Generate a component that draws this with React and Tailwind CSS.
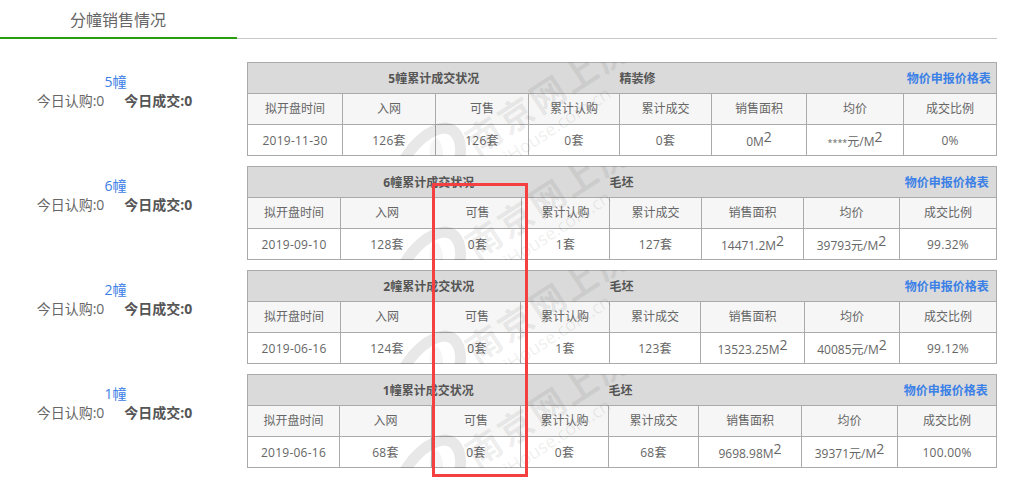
const font = { fontFamily: '"Open Sans", "Noto Sans CJK SC", sans-serif' };

const headers = ["拟开盘时间", "入网", "可售", "累计认购", "累计成交", "销售面积", "均价", "成交比例"];

const blocks = [
  {
    name: "5幢", title: "5幢累计成交状况", deco: "精装修",
    widths: [95, 93, 93, 91, 92, 95, 97, 93],
    cells: ["2019-11-30", "126套", "126套", "0套", "0套", ["0M"], ["元/M", "****"], "0%"],
  },
  {
    name: "6幢", title: "6幢累计成交状况", deco: "毛坯",
    widths: [93, 93, 88, 88, 92, 102, 96, 97],
    cells: ["2019-09-10", "128套", "0套", "1套", "127套", ["14471.2M"], ["39793元/M"], "99.32%"],
  },
  {
    name: "2幢", title: "2幢累计成交状况", deco: "毛坯",
    widths: [93, 93, 87, 89, 91, 104, 95, 97],
    cells: ["2019-06-16", "124套", "0套", "1套", "123套", ["13523.25M"], ["40085元/M"], "99.12%"],
  },
  {
    name: "1幢", title: "1幢累计成交状况", deco: "毛坯",
    widths: [92, 92, 89, 88, 90, 103, 96, 99],
    cells: ["2019-06-16", "68套", "0套", "0套", "68套", ["9698.98M"], ["39371元/M"], "100.00%"],
  },
];

function Watermark() {
  return (
    <div className="pointer-events-none absolute inset-0 overflow-hidden">
      <svg className="absolute left-0 top-0" width="750" height="94" viewBox="0 0 750 94" fill="none">
        <path d="M156 100 C166 82 182 67 198 66 C212 67 217 84 211 102" stroke="#000" strokeOpacity="0.09" strokeWidth="11" />
        <path d="M186 100 C180 90 182 80 190 76 C196 82 198 92 194 100 Z" fill="#000" fillOpacity="0.04" />
      </svg>
      <span className="absolute left-[302px] top-[32px] -translate-x-1/2 -translate-y-1/2 -rotate-[33deg] whitespace-nowrap text-[35px] font-bold tracking-[3px] text-black/[0.08]">
        南京网上房
      </span>
      <span className="absolute left-[310px] top-[63px] -translate-x-1/2 -translate-y-1/2 -rotate-[33deg] whitespace-nowrap text-[18px] text-black/[0.08]">
        iHouse.com.cn
      </span>
    </div>
  );
}

function Block({ b }) {
  return (
    <div className="flex">
      <div className="w-[229px] pt-[10px] text-center text-[14px] leading-[20px] text-[#666]">
        <div className="pl-[2px] text-[#3b80e6]">{b.name}</div>
        <div className="-mt-[1px]">
          <span>今日认购:0</span>
          <span className="ml-[20px] font-bold text-[#555]">今日成交:0</span>
        </div>
      </div>
      <div className="relative ml-[18px] h-[94px] w-[750px] overflow-hidden">
        <table className="w-[750px] table-fixed border-collapse text-center text-[12px] text-[#666]">
          <colgroup>
            {b.widths.map((w, i) => (
              <col key={i} style={{ width: w }} />
            ))}
          </colgroup>
          <tbody>
            <tr className="h-[31px] border border-[#aaa] bg-[#dadada] font-bold text-[#555]">
              <td colSpan={4} className="p-0 pt-[2px]">{b.title}</td>
              <td colSpan={3} className="p-0 pt-[2px] text-left">{b.deco}</td>
              <td className="p-0 pt-[2px] pr-[2px] text-[#3b80e6]">物价申报价格表</td>
            </tr>
            <tr className="h-[31px] bg-[#f6f6f6]">
              {headers.map((h) => (
                <td key={h} className="border border-[#aaa] p-0">{h}</td>
              ))}
            </tr>
            <tr className="h-[31px] bg-white tracking-[0.25px]">
              {b.cells.map((c, i) => (
                <td key={i} className="border border-[#aaa] p-0 pt-[2px]">
                  {Array.isArray(c) ? (
                    <span className="relative top-[1px] tracking-normal">
                      {c[1] && <span className="text-[9px]">{c[1]}</span>}
                      {c[0]}
                      <sup className="-top-[0.3em] text-[14px]">2</sup>
                    </span>
                  ) : (
                    c
                  )}
                </td>
              ))}
            </tr>
          </tbody>
        </table>
        <Watermark />
      </div>
    </div>
  );
}

export default function App() {
  return (
    <div className="relative h-[495px] w-[1016px] overflow-hidden bg-white" style={font}>
      <div className="flex h-[39px] w-[997px] border-b border-[#c8c8c8]">
        <div className="h-[39px] w-[237px] border-b-2 border-[#2a9d0c] pl-[70px] text-[16px] leading-[40px] text-[#666]">
          分幢销售情况
        </div>
      </div>
      <div className="mt-[23px] flex flex-col gap-[10px]">
        {blocks.map((b) => (
          <Block key={b.name} b={b} />
        ))}
      </div>
      <div className="absolute left-[432px] top-[183px] h-[294px] w-[96px] border-[3px] border-[#f44040]" />
    </div>
  );
}
